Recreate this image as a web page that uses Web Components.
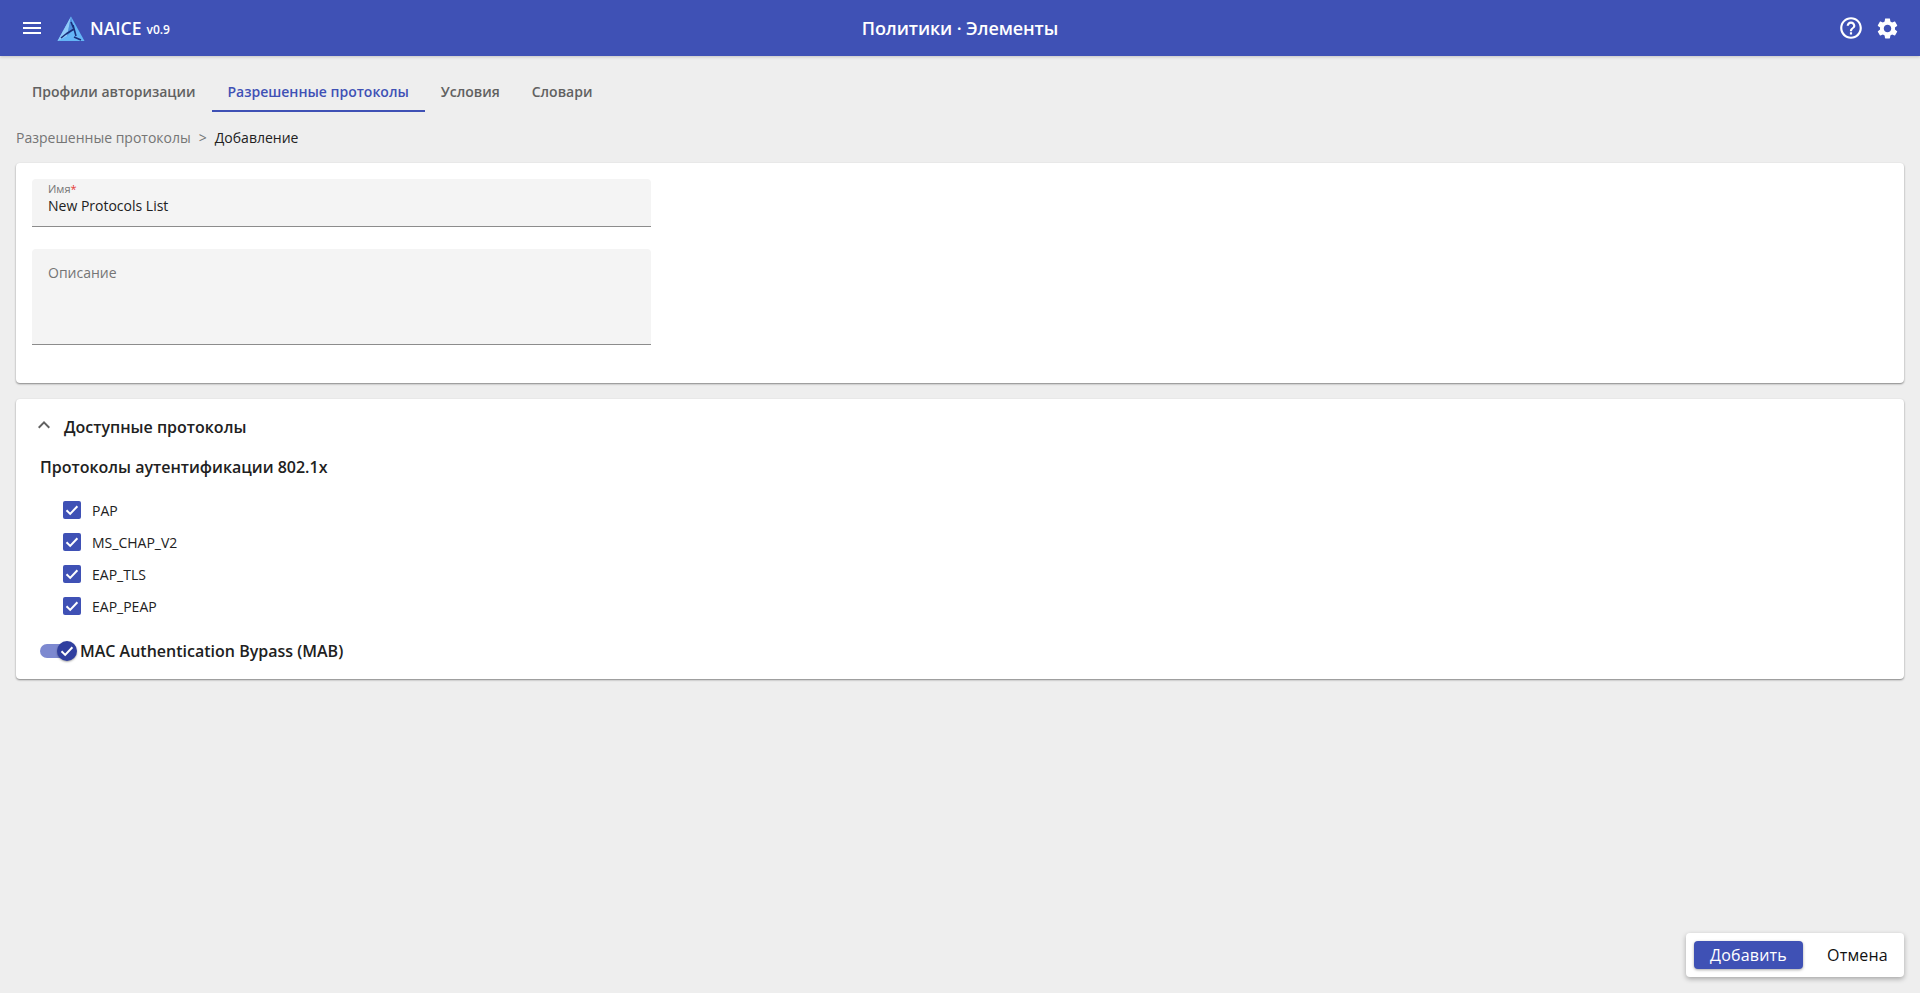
<!DOCTYPE html>
<html lang="ru">
<head>
<meta charset="utf-8">
<title>NAICE</title>
<style>
  html, body { margin: 0; height: 100%; }
  body { background: #eeeeee; font-family: "Open Sans", "Noto Sans", sans-serif; color: #212121; }
  naice-app { height: 993px; }
</style>
</head>
<body>
<naice-app>
  <naice-header slot="header" title-text="Политики · Элементы"></naice-header>
  <naice-tabs slot="tabs"></naice-tabs>
  <naice-breadcrumb slot="crumbs" parent="Разрешенные протоколы" current="Добавление"></naice-breadcrumb>
  <naice-card slot="content">
    <naice-field label="Имя" required value="New Protocols List"></naice-field>
    <naice-field label="Описание" multiline></naice-field>
  </naice-card>
  <naice-protocols slot="content"></naice-protocols>
  <naice-actions slot="footer"></naice-actions>
</naice-app>

<script>
class NaiceApp extends HTMLElement {
  constructor() {
    super();
    this.attachShadow({ mode: 'open' }).innerHTML = `
      <style>
        :host { display: flex; flex-direction: column; }
        main { display: flex; flex-direction: column; gap: 16px; padding: 0 16px; }
        footer { margin-top: auto; display: flex; justify-content: flex-end; padding: 0 16px 16px; }
      </style>
      <slot name="header"></slot>
      <slot name="tabs"></slot>
      <slot name="crumbs"></slot>
      <main><slot name="content"></slot></main>
      <footer><slot name="footer"></slot></footer>`;
  }
}

class NaiceHeader extends HTMLElement {
  constructor() {
    super();
    this.attachShadow({ mode: 'open' }).innerHTML = `
      <style>
        :host { display: grid; grid-template-columns: 1fr auto 1fr; align-items: center; height: 56px; background: #3f51b5; color: #fff; box-shadow: 0 1px 3px rgba(0,0,0,.18); position: relative; }
        .left { display: flex; align-items: center; padding-left: 20px; }
        .logo { margin: 2px 0 0 13px; display: block; }
        .name { margin-left: 5px; font-size: 17.500px; font-weight: 600; }
        .ver { margin-left: 5px; font-size: 12px; font-weight: 600; position: relative; top: 1px; }
        .title { font-size: 18px; font-weight: 600; letter-spacing: -.12px; }
        .right { display: flex; justify-content: flex-end; align-items: center; gap: 11px; padding-right: 20px; }
        svg { display: block; }
      </style>
      <div class="left">
        <svg width="24" height="24" viewBox="0 0 24 24"><path fill="#fff" d="M3 18h18v-2H3v2zm0-5h18v-2H3v2zm0-7v2h18V6H3z"/></svg>
        <svg class="logo" width="28" height="26" viewBox="0 0 28 26">
          <polygon points="14,0.500 0.500,25 27.500,25" fill="#64b5f6"/>
          <polygon points="14,0.500 0.500,25 10,20" fill="#90caf9"/>
          <polygon points="14,0.500 10,20 17,13" fill="#4f8fdc"/>
          <path d="M14 6 L16.500 12 M17 13 L9 18 M9 18 L4 22 M17 21 L24 24 M16 9 L19 20" stroke="#1a2f7a" stroke-width="1.600" fill="none"/>
        </svg>
        <span class="name">NAICE</span><span class="ver">v0.9</span>
      </div>
      <div class="title"></div>
      <div class="right">
        <svg width="26" height="26" viewBox="0 0 24 24"><path fill="#fff" d="M11 18h2v-2h-2v2zm1-16C6.480 2 2 6.480 2 12s4.480 10 10 10 10-4.480 10-10S17.520 2 12 2zm0 18c-4.410 0-8-3.590-8-8s3.590-8 8-8 8 3.590 8 8-3.590 8-8 8zm0-14c-2.210 0-4 1.790-4 4h2c0-1.100.9-2 2-2s2 .9 2 2c0 2-3 1.750-3 5h2c0-2.250 3-2.500 3-5 0-2.210-1.790-4-4-4z"/></svg>
        <svg width="25" height="25" viewBox="0 0 24 24"><path fill="#fff" d="M19.140 12.940c.04-.3.060-.61.060-.94 0-.32-.02-.64-.07-.94l2.030-1.580c.18-.14.23-.41.120-.61l-1.920-3.320c-.12-.22-.37-.29-.59-.22l-2.390.96c-.5-.38-1.030-.7-1.620-.94l-.36-2.540c-.04-.24-.24-.41-.48-.41h-3.840c-.24 0-.43.170-.47.410l-.36 2.540c-.59.240-1.130.570-1.620.94l-2.390-.96c-.22-.08-.47 0-.59.220L2.740 8.870c-.12.210-.08.470.12.610l2.030 1.580c-.05.300-.09.630-.09.940s.02.640.07.940l-2.030 1.580c-.18.140-.23.410-.12.610l1.920 3.320c.12.220.37.290.59.220l2.390-.96c.5.380 1.030.7 1.620.94l.36 2.540c.05.240.24.410.48.410h3.840c.24 0 .44-.17.470-.41l.36-2.540c.59-.24 1.130-.56 1.620-.94l2.390.96c.22.080.47 0 .59-.22l1.920-3.320c.12-.22.070-.47-.12-.61l-2.010-1.580zM12 15.600c-1.980 0-3.600-1.620-3.600-3.600s1.620-3.600 3.600-3.600 3.600 1.620 3.600 3.600-1.620 3.600-3.600 3.600z"/></svg>
      </div>`;
    this.shadowRoot.querySelector('.title').textContent = this.getAttribute('title-text');
  }
}

class NaiceTabs extends HTMLElement {
  constructor() {
    super();
    const tabs = ['Профили авторизации', 'Разрешенные протоколы', 'Условия', 'Словари'];
    this.attachShadow({ mode: 'open' }).innerHTML = `
      <style>
        :host { display: flex; padding: 16px 16px 0; height: 56px; box-sizing: border-box; }
        div { padding: 0 16px; display: flex; align-items: center; font-size: 14px; font-weight: 600; color: #616161; border-bottom: 2px solid transparent; box-sizing: border-box; height: 40px; }
        .on { color: #3f51b5; border-bottom-color: #3f51b5; }
      </style>
      ${tabs.map((t, i) => `<div class="${i === 1 ? 'on' : ''}">${t}</div>`).join('')}`;
  }
}

class NaiceBreadcrumb extends HTMLElement {
  constructor() {
    super();
    this.attachShadow({ mode: 'open' }).innerHTML = `
      <style>
        :host { display: flex; align-items: center; height: 51px; box-sizing: border-box; padding: 0 16px 1px; font-size: 14px; color: #757575; }
        .sep { margin: 0 8px; }
        .cur { color: #212121; }
      </style>
      <span>${this.getAttribute('parent')}</span><span class="sep">&gt;</span><span class="cur">${this.getAttribute('current')}</span>`;
  }
}

class NaiceCard extends HTMLElement {
  constructor() {
    super();
    this.attachShadow({ mode: 'open' }).innerHTML = `
      <style>
        :host { display: flex; flex-direction: column; gap: 22px; height: 220px; box-sizing: border-box; padding: 16px; background: #fff; border-radius: 4px; box-shadow: 0 1px 2px rgba(0,0,0,.45); }
      </style>
      <slot></slot>`;
  }
}

class NaiceField extends HTMLElement {
  constructor() {
    super();
    const multi = this.hasAttribute('multiline');
    const value = this.getAttribute('value');
    this.attachShadow({ mode: 'open' }).innerHTML = `
      <style>
        :host { display: block; width: 619px; box-sizing: border-box; background: #f4f4f4; border-bottom: 1px solid #8c8c8c; border-radius: 4px 4px 0 0; padding: 0 16px; height: ${multi ? 96 : 48}px; }
        .small { font-size: 11px; line-height: 14px; color: #757575; padding-top: 3px; }
        .star { color: #e53935; }
        .value { font-size: 14px; line-height: 20px; color: #212121; }
        .big { font-size: 14px; line-height: 20px; color: #757575; padding-top: 14px; }
      </style>
      ${value
        ? `<div class="small">${this.getAttribute('label')}<span class="star">*</span></div><div class="value">${value}</div>`
        : `<div class="big">${this.getAttribute('label')}</div>`}`;
  }
}

class NaiceCheck extends HTMLElement {
  constructor() {
    super();
    this.attachShadow({ mode: 'open' }).innerHTML = `
      <style>
        :host { display: flex; align-items: center; height: 32px; font-size: 14px; color: #212121; }
        .box { width: 18px; height: 18px; border-radius: 2px; background: #3f51b5; margin-right: 11px; display: flex; align-items: center; justify-content: center; }
        svg { display: block; }
      </style>
      <div class="box"><svg width="14" height="14" viewBox="0 0 14 14"><path d="M1.500 7.300 L5.200 10.900 L12.400 3.200" fill="none" stroke="#fff" stroke-width="2"/></svg></div>
      <span><slot></slot></span>`;
  }
}

class NaiceSwitch extends HTMLElement {
  constructor() {
    super();
    this.attachShadow({ mode: 'open' }).innerHTML = `
      <style>
        :host { display: flex; align-items: center; height: 24px; font-size: 16px; font-weight: 600; color: #212121; }
        .track { width: 36px; height: 14px; border-radius: 7px; background: #7d89d0; position: relative; margin-right: 4px; }
        .thumb { position: absolute; right: -1px; top: -3px; width: 20px; height: 20px; border-radius: 50%; background: #303f9f; box-shadow: 0 1px 2px rgba(0,0,0,.35); display: flex; align-items: center; justify-content: center; }
        svg { display: block; }
      </style>
      <div class="track"><div class="thumb"><svg width="14" height="14" viewBox="0 0 14 14"><path d="M1.500 7.300 L5.200 10.900 L12.400 3.200" fill="none" stroke="#fff" stroke-width="2"/></svg></div></div>
      <span><slot></slot></span>`;
  }
}

class NaiceProtocols extends HTMLElement {
  constructor() {
    super();
    this.attachShadow({ mode: 'open' }).innerHTML = `
      <style>
        :host { display: block; height: 280px; box-sizing: border-box; background: #fff; border-radius: 4px; box-shadow: 0 1px 2px rgba(0,0,0,.45); padding: 0 24px; }
        .head { display: flex; align-items: center; height: 56px; font-size: 16px; font-weight: 600; color: #212121; }
        .head svg { display: block; margin-left: -8px; margin-right: 8px; position: relative; top: -2px; }
        h3 { margin: 0; font-size: 16px; font-weight: 600; line-height: 24px; color: #212121; }
        .list { margin: 15px 0 0 23px; }
        naice-check { width: max-content; }
        naice-switch { margin-top: 17px; }
      </style>
      <div class="head">
        <svg width="24" height="24" viewBox="0 0 24 24"><path fill="#616161" d="M12 8l-6 6 1.410 1.410L12 10.830l4.590 4.580L18 14z"/></svg>
        Доступные протоколы
      </div>
      <h3>Протоколы аутентификации 802.1x</h3>
      <div class="list">
        <naice-check>PAP</naice-check>
        <naice-check>MS_CHAP_V2</naice-check>
        <naice-check>EAP_TLS</naice-check>
        <naice-check>EAP_PEAP</naice-check>
      </div>
      <naice-switch>MAC Authentication Bypass (MAB)</naice-switch>`;
  }
}

class NaiceActions extends HTMLElement {
  constructor() {
    super();
    this.attachShadow({ mode: 'open' }).innerHTML = `
      <style>
        :host { display: flex; align-items: center; height: 44px; width: 218px; box-sizing: border-box; padding-left: 8px; background: #fff; border-radius: 4px; box-shadow: 0 2px 5px rgba(0,0,0,.3); font-size: 16px; letter-spacing: .2px; }
        .primary { width: 109px; height: 28px; display: flex; align-items: center; justify-content: center; background: #3f51b5; color: #fff; border-radius: 4px; box-shadow: 0 1px 3px rgba(0,0,0,.35); }
        .plain { flex: 1; margin-left: 8px; text-align: center; color: #111; }
      </style>
      <div class="primary">Добавить</div>
      <div class="plain">Отмена</div>`;
  }
}

customElements.define('naice-app', NaiceApp);
customElements.define('naice-header', NaiceHeader);
customElements.define('naice-tabs', NaiceTabs);
customElements.define('naice-breadcrumb', NaiceBreadcrumb);
customElements.define('naice-card', NaiceCard);
customElements.define('naice-field', NaiceField);
customElements.define('naice-check', NaiceCheck);
customElements.define('naice-switch', NaiceSwitch);
customElements.define('naice-protocols', NaiceProtocols);
customElements.define('naice-actions', NaiceActions);
</script>
</body>
</html>
